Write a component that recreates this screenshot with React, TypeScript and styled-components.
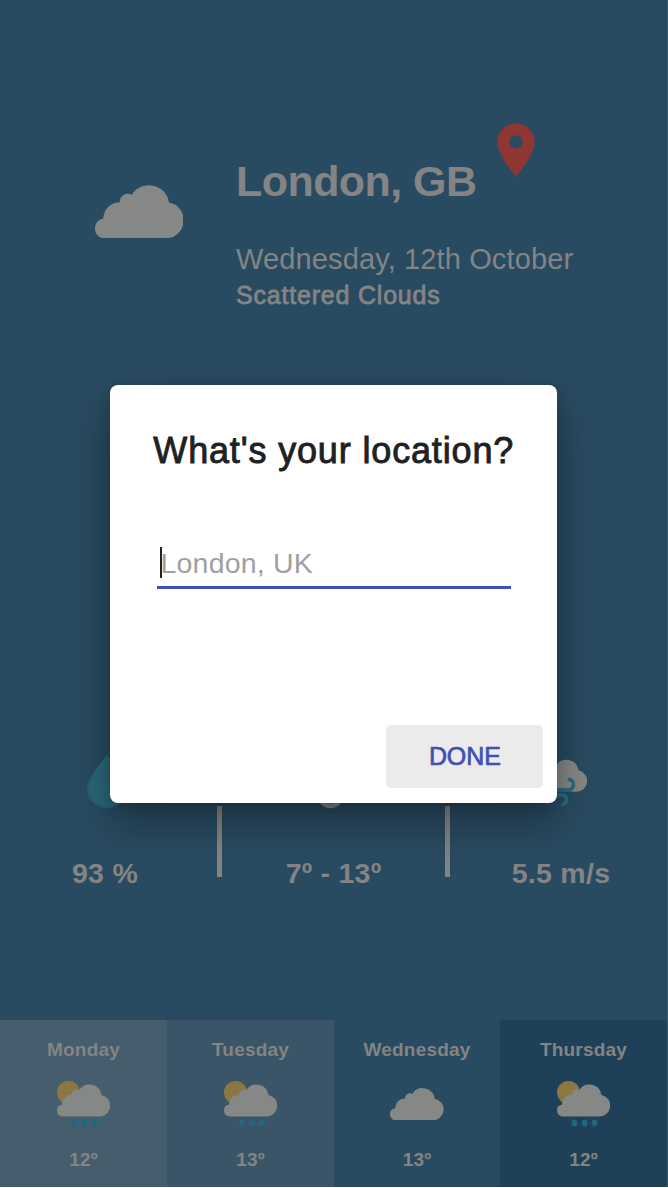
import React from "react";
import styled, { createGlobalStyle } from "styled-components";

const GlobalStyle = createGlobalStyle`
  *, *::before, *::after { box-sizing: border-box; }
  body {
    margin: 0;
    background: #fff;
    font-family: "Liberation Sans", Arial, sans-serif;
    overflow: hidden;
  }
`;

const MUTED = "#848484";
const CLOUD = "#868886";

const Page = styled.main`
  position: relative;
  display: flex;
  flex-direction: column;
  width: 668px;
  height: 1187px;
  background: #294b61;
  border-right: 1px solid #3b5a6e;
  color: ${MUTED};
  overflow: hidden;
`;

const Hero = styled.header`
  display: flex;
  align-items: flex-start;
  height: 755px;
  padding-top: 123px;
`;

const HeroIcon = styled.div`
  width: 236px;
  padding: 62px 0 0 94.7px;
  line-height: 0;
`;

const HeroText = styled.div`
  display: flex;
  flex-direction: column;
`;

const CityRow = styled.div`
  display: flex;
  align-items: flex-start;
  gap: 19px;
  height: 115px;
`;

const City = styled.h1`
  margin: 34px 0 0;
  width: 242px;
  font-size: 43px;
  line-height: 48px;
  font-weight: 700;
  letter-spacing: -0.55px;
  white-space: nowrap;
`;

const DateLine = styled.p`
  margin: 4px 0 0;
  font-size: 29px;
  line-height: 34px;
  letter-spacing: 0.13px;
  white-space: nowrap;
`;

const Condition = styled.p`
  margin: 4px 0 0;
  font-size: 25px;
  line-height: 30px;
  letter-spacing: 0.8px;
  -webkit-text-stroke: 0.8px ${MUTED};
`;

const Stats = styled.section`
  display: grid;
  grid-template-columns: 210px 19.5px 208px 20px 207px;
  height: 265px;
`;

const Stat = styled.div`
  display: flex;
  flex-direction: column;
  align-items: center;
`;

const StatIcon = styled.div<{ $shift?: number }>`
  height: 54px;
  margin-left: ${(p) => p.$shift ?? 0}px;
  line-height: 0;
`;

const StatValue = styled.div<{ $spacing?: number }>`
  margin-top: 48px;
  font-size: 28.5px;
  line-height: 32px;
  font-weight: 700;
  letter-spacing: ${(p) => p.$spacing ?? 0}px;
  white-space: nowrap;
`;

const Divider = styled.div`
  justify-self: center;
  width: 5px;
  height: 71px;
  margin-top: 51px;
  background: ${MUTED};
`;

const Forecast = styled.section`
  display: grid;
  grid-template-columns: 167px 167px 166px 167px;
  height: 167px;
`;

const Day = styled.div<{ $bg: string }>`
  display: flex;
  flex-direction: column;
  align-items: center;
  padding-top: 19px;
  background: ${(p) => p.$bg};
  font-size: 19px;
  line-height: 22px;
  font-weight: 700;
  letter-spacing: 0.2px;
`;

const DayIcon = styled.div`
  display: flex;
  align-items: center;
  height: 46px;
  margin: 20px 0 22px;
`;

const Backdrop = styled.div`
  position: absolute;
  inset: 0;
`;

const Dialog = styled.section`
  display: flex;
  flex-direction: column;
  width: 447px;
  height: 418px;
  margin: 384.5px 0 0 110.3px;
  padding: 46px 14px 15px 43px;
  border-radius: 8px;
  background: #fff;
  color: #212121;
  box-shadow: 0 20px 46px rgba(0, 0, 0, 0.34), 0 4px 14px rgba(0, 0, 0, 0.14);
`;

const DialogTitle = styled.h2`
  margin: 0;
  font-size: 36px;
  line-height: 40px;
  font-weight: 400;
  letter-spacing: 0.85px;
  white-space: nowrap;
  -webkit-text-stroke: 0.9px #212121;
`;

const Field = styled.div`
  display: flex;
  align-items: center;
  width: 354px;
  height: 47px;
  margin: 71px 0 0 3.7px;
  padding: 0 0 2px 3.5px;
  border-bottom: 3px solid #3f51b5;
  box-shadow: 0 0 0.5px rgba(63, 81, 181, 0.1);
`;

const Caret = styled.span`
  width: 2px;
  height: 31px;
  background: #222;
  margin-right: -2px;
`;

const Placeholder = styled.span`
  font-size: 28.5px;
  line-height: 34px;
  letter-spacing: 0.2px;
  color: #a0a0a0;
`;

const DoneButton = styled.button`
  align-self: flex-end;
  width: 157px;
  height: 63px;
  margin-top: auto;
  padding: 0;
  border: 0;
  border-radius: 5px;
  background: #ebebeb;
  color: #3f51b5;
  font: 400 25px/30px "Liberation Sans", Arial, sans-serif;
  letter-spacing: -0.1px;
  -webkit-text-stroke: 0.7px #3f51b5;
`;

const cloudPath =
  "M9.3 53.3A9.3 9.3 0 0 1 0 44V42.5A9 9 0 0 1 8.3 33.8A16.2 16.5 0 0 1 24.8 17.2A8 8 0 0 1 36.8 9.8A20.2 20.2 0 0 1 74 17.6A18 18 0 0 1 70.5 53.3Z";

const Cloud = ({ width }: { width: number }) => (
  <svg width={width} height={(width * 53.3) / 88.5} viewBox="0 0 88.5 53.3">
    <path d={cloudPath} fill={CLOUD} />
  </svg>
);

const RainCloud = () => (
  <svg width="53" height="46" viewBox="0 0 53 46">
    <circle cx="11.5" cy="11.5" r="11.5" fill="#8c7742" />
    <path d={cloudPath} fill={CLOUD} transform="translate(0 3.4) scale(.6)" />
    {[17.6, 27.6, 37.6].map((x) => (
      <rect key={x} x={x - 2.8} y="38.6" width="5.6" height="6.8" rx="2.8" fill="#21677f" />
    ))}
  </svg>
);

const Pin = () => (
  <svg width="38" height="54" viewBox="0 0 38 54">
    <path
      fillRule="evenodd"
      fill="#8f3632"
      d="M19 .2C8.700 .2 .4 8.500 .4 18.800C.4 32.700 19 53.500 19 53.500S37.600 32.700 37.600 18.800C37.600 8.500 29.300 .2 19 .2ZM19 12.200A6.600 6.600 0 1 1 19 25.400A6.600 6.600 0 1 1 19 12.200Z"
    />
  </svg>
);

const Drop = () => (
  <svg width="40" height="54" viewBox="0 0 40 54">
    <path d="M20 0S0 22 0 34A20 19.500 0 0 0 40 34C40 22 20 0 20 0Z" fill="#28617a" />
    <path d="M20 0S2 21 2 33A18 18 0 0 0 38 33C38 21 20 0 20 0Z" fill="#2b687b" />
  </svg>
);

const Thermometer = () => (
  <svg width="34" height="54" viewBox="0 0 34 54">
    <path d="M6.500 8a7 7 0 0 1 14 0V29.300A13 13 0 1 1 6.500 29.300Z" fill={CLOUD} />
    <circle cx="13.500" cy="40.500" r="8.500" fill="#8f5a56" />
  </svg>
);

const WindCloud = () => (
  <svg width="53" height="54" viewBox="0 0 53 54">
    <path d={cloudPath} fill={CLOUD} transform="translate(0 4.7) scale(.6)" />
    <path d="M10 37.100H38" stroke="#294b61" strokeWidth="1.4" />
    <g fill="none" stroke="#296b80" strokeWidth="3.5" strokeLinecap="round">
      <path d="M10 34.700H35.200A5.200 5.200 0 0 0 35.200 24.500" />
      <path d="M10 40H28.800A4.950 4.950 0 0 1 28.800 49.600" />
    </g>
  </svg>
);

const days = [
  { name: "Monday", temp: "12º", bg: "#455d6d", rain: true },
  { name: "Tuesday", temp: "13º", bg: "#3a5567", rain: true },
  { name: "Wednesday", temp: "13º", bg: "#294b61", rain: false },
  { name: "Thursday", temp: "12º", bg: "#1e4159", rain: true },
];

export default function App() {
  return (
    <>
      <GlobalStyle />
      <Page>
        <Hero>
          <HeroIcon>
            <Cloud width={88.5} />
          </HeroIcon>
          <HeroText>
            <CityRow>
              <City>London, GB</City>
              <Pin />
            </CityRow>
            <DateLine>Wednesday, 12th October</DateLine>
            <Condition>Scattered Clouds</Condition>
          </HeroText>
        </Hero>
        <Stats>
          <Stat>
            <StatIcon $shift={3}>
              <Drop />
            </StatIcon>
            <StatValue $spacing={0.3}>93 %</StatValue>
          </Stat>
          <Divider />
          <Stat>
            <StatIcon>
              <Thermometer />
            </StatIcon>
            <StatValue $spacing={0.25}>7º - 13º</StatValue>
          </Stat>
          <Divider />
          <Stat>
            <StatIcon $shift={-2}>
              <WindCloud />
            </StatIcon>
            <StatValue $spacing={0.3}>5.5 m/s</StatValue>
          </Stat>
        </Stats>
        <Forecast>
          {days.map((d) => (
            <Day key={d.name} $bg={d.bg}>
              <span>{d.name}</span>
              <DayIcon>{d.rain ? <RainCloud /> : <Cloud width={53.5} />}</DayIcon>
              <span>{d.temp}</span>
            </Day>
          ))}
        </Forecast>
        <Backdrop>
          <Dialog role="dialog" aria-label="What's your location?">
            <DialogTitle>What's your location?</DialogTitle>
            <Field>
              <Caret />
              <Placeholder>London, UK</Placeholder>
            </Field>
            <DoneButton>DONE</DoneButton>
          </Dialog>
        </Backdrop>
      </Page>
    </>
  );
}
